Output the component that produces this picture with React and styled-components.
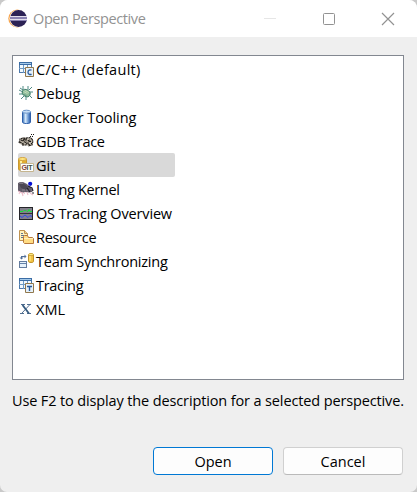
import React from "react";
import styled, { createGlobalStyle } from "styled-components";

const GlobalStyle = createGlobalStyle`
  * { box-sizing: border-box; }
  body { margin: 0; background: #c9c9c9; overflow: hidden; }
`;

const Dialog = styled.main`
  display: flex;
  flex-direction: column;
  width: 417px;
  height: 492px;
  overflow: hidden;
  border-radius: 8px 8px 7px 7px;
  background: #efefef;
  color: #000;
  font: 14.5px/24px "Open Sans", "Noto Sans", sans-serif;
`;

const TitleBar = styled.header`
  display: flex;
  align-items: center;
  height: 37px;
  padding-left: 8px;
  background: #fff;
  color: #929292;
`;

const Title = styled.h1`
  flex: 1;
  margin: 0 0 0 5px;
  font-size: 14.5px;
  font-weight: 400;
  white-space: nowrap;
`;

const Label = styled.span`
  letter-spacing: ${({ $spacing }) => $spacing || 0}px;
  white-space: nowrap;
`;

const WindowControls = styled.div`
  display: flex;
  height: 37px;
`;

const WindowButton = styled.button`
  display: grid;
  place-items: center;
  width: 59px;
  padding: 0;
  border: 0;
  background: none;
  color: ${({ $faint }) => ($faint ? "#e6e6e6" : "#929292")};
`;

const Content = styled.section`
  display: flex;
  flex: 1;
  flex-direction: column;
  padding: 18px 12px 17px;
`;

const List = styled.ul`
  display: flex;
  flex-direction: column;
  align-items: flex-start;
  width: 392px;
  height: 325px;
  margin: 0;
  padding: 1px 5px;
  border: 1px solid #828790;
  background: #fff;
  list-style: none;
`;

const Item = styled.li`
  display: flex;
  align-items: center;
  gap: 2px;
  width: 157px;
  height: 24px;
  border-radius: 2px;
  background: ${({ $selected }) => ($selected ? "#d9d9d9" : "transparent")};

  ${Label} {
    padding-top: 2px;
  }
`;

const Icon = styled.svg`
  display: block;
  flex: none;
  width: ${({ $size }) => $size || 16}px;
  height: ${({ $size }) => $size || 16}px;
`;

const Hint = styled.p`
  margin: 9px 0 0;
`;

const Actions = styled.footer`
  display: flex;
  justify-content: flex-end;
  gap: 10px;
  margin-top: auto;
  padding-right: 2px;
`;

const ActionButton = styled.button`
  width: 120px;
  height: 28px;
  padding: 1px 0 0;
  border: 1px solid ${({ $primary }) => ($primary ? "#0078d4" : "#d0d0d0")};
  border-bottom-color: ${({ $primary }) => ($primary ? "#0078d4" : "#bababa")};
  border-radius: 4px;
  background: #fdfdfd;
  color: #000;
  font: inherit;
  line-height: 26px;
`;

const TableBase = () => (
  <g shapeRendering="crispEdges">
    <path d="M1.500 1.500h12v10h-12z" fill="#f2f9fe" stroke="#4d79ab" />
    <path d="M1 1h13v3H1z" fill="#3b6da5" />
    <path d="M2 2h11v1H2z" fill="#a5caea" />
    <path d="M5.500 4v8M9.500 4v8M1 7.500h13" stroke="#6f9bc5" fill="none" />
  </g>
);

const CppIcon = () => (
  <Icon viewBox="0 0 16 16">
    <TableBase />
    <path d="M7.500 6.500h8v9h-8z" fill="#e6f1fa" stroke="#91784c" />
    <path d="M13.500 9.300c-1.300-1-3.500-.3-3.500 1.900s2.200 2.800 3.500 1.900" fill="none" stroke="#285b9c" strokeWidth="1.300" />
  </Icon>
);

const DebugIcon = () => (
  <Icon viewBox="0 0 16 16">
    <path d="M5 1v4M10 1v4M1 5l4 2M1 9h4M3 14l3-3M8 11v4M11 10l3 3M11 7h4M11 5l3-3M2 3l3 2" fill="none" stroke="#3b7d76" strokeWidth=".9" />
    <ellipse cx="8.200" cy="8" rx="4.300" ry="3.300" transform="rotate(30 8 8)" fill="#8fbd9c" stroke="#337461" strokeWidth=".8" />
    <path d="M5.500 6.500l4 2M7 5.500l4 2" stroke="#c4dcb8" />
    <path d="M5.500 9.500l3 1.200" stroke="#4b8975" strokeWidth=".8" />
  </Icon>
);

const DockerIcon = () => (
  <Icon viewBox="0 0 16 16">
    <defs>
      <linearGradient id="cylinder">
        <stop stopColor="#336fb8" />
        <stop offset=".38" stopColor="#d5e8fa" />
        <stop offset=".65" stopColor="#7fa9dc" />
        <stop offset="1" stopColor="#2356a7" />
      </linearGradient>
    </defs>
    <path d="M4.500 3v10c0 1 1.500 1.500 4 1.500s4-.5 4-1.500V3" fill="url(#cylinder)" stroke="#2f60ab" />
    <ellipse cx="8.500" cy="2.700" rx="4" ry="1.500" fill="#c6def7" stroke="#6b95ca" />
  </Icon>
);

const TraceIcon = () => (
  <Icon viewBox="0 0 16 16">
    <path d="M2 6l3-1.500h3l1 1 3-.5 2 1 1 3-1 3-3 1-3-1-3 .5-2-1L1 10z" fill="#b8b0a3" />
    <path d="M1 10l1-4 3-1 3 .5 3 2.500M2 9l3 2 1-3 3 3M3 7l2 1 1-2 3 2M4 12h4l1-2 3 2M8 5l4-.5 2 1.500M10 6l2 2-2 2M14 6l1 2-1 4-4 1" fill="none" stroke="#25211d" strokeWidth="1.100" strokeDasharray="2 .5" />
    <path d="M12 8h1v1h-1zM13 10h1v1h-1zM12 3h1v1h-1zM14 3h1v1h-1zM13 1h1v1h-1zM15 1h1v1h-1z" fill="#171513" />
    <path d="M9 7l2-1M11 10h1M5 9h1" stroke="#eee4d2" />
  </Icon>
);

const IconText = styled.text`
  font-family: "Liberation Sans", sans-serif;
  font-size: 7px;
  font-weight: 700;
`;

const GitIcon = () => (
  <Icon viewBox="0 0 16 16">
    <path d="M.5 2v10c0 1 1.700 1.500 4 1.500s4-.5 4-1.500V2" fill="#e2ad31" stroke="#c89832" />
    <path d="M2 4h2v9H2z" fill="#fff09a" />
    <ellipse cx="4.500" cy="2" rx="4" ry="1.500" fill="#ffe681" stroke="#d2a340" />
    <path d="M2.500 6.500h13v8h-13z" fill="#fff" stroke="#c5b58f" />
    <IconText x="3.500" y="13" textLength="11" lengthAdjust="spacing">
      <tspan fill="#803b35">G</tspan><tspan fill="#405344">IT</tspan>
    </IconText>
  </Icon>
);

const KernelIcon = () => (
  <Icon viewBox="0 0 16 16">
    <path d="M0 2l2-1h3l4 2 3 3 3 3-1 2-3 .5-4-.5-3 1-4-2z" fill="#625c69" />
    <path d="M1 3l3-1 4 2 3 4-3 1-5-2z" fill="#4b4752" />
    <path d="M1 2l4 .3M4 9h3M8 9h3M13 9h2" stroke="#8d8791" />
    <path d="M10 5l4 2 1 3M9 7l3 4M14 12h2" fill="none" stroke="#211e2a" strokeWidth="1.200" />
    <circle cx="12.200" cy="2.800" r="2.100" fill="#0710d0" />
    <path d="M2 11l-1 2M4 11l1 4M7 11l-1 2M9 11l1 3M12 12l3 2M0 10l4 2" stroke="#edc2ce" strokeWidth="1.200" />
  </Icon>
);

const OverviewIcon = () => (
  <Icon viewBox="0 0 16 16">
    <g shapeRendering="crispEdges">
      <path d="M1.500 2.500h13v12h-13z" fill="#81808b" stroke="#252529" />
      <path d="M2 8.500h12" stroke="#323239" />
    </g>
    <path d="M2 6.500h3l1-1h2l1 1h1l1-2 1 2h2" fill="none" stroke="#12e339" />
    <path d="M2 11l2 1.500L7 10l3 2.500 2-2 2 1" fill="none" stroke="#3049f2" />
  </Icon>
);

const ResourceIcon = () => (
  <Icon viewBox="0 0 16 16">
    <path d="M1.500 1.500h5l3 3v7h-8z" fill="#fff2bd" stroke="#bf9250" />
    <path d="M6.500 1.500v3h3" fill="#ecd093" stroke="#bf9250" />
    <path d="M3 4.500h2M3 6.500h3M3 8.500h2" stroke="#61748f" />
    <path d="M5.500 13.500v-6l1-1h3l1 2h4l1 1v5h-9z" fill="#ffdc83" stroke="#b6783c" />
    <path d="M6 9.500h9" stroke="#fff1bd" />
  </Icon>
);

const TeamIcon = () => (
  <Icon viewBox="0 0 16 16">
    <g shapeRendering="crispEdges">
      <path d="M1.500 8.500h7v6h-7z" fill="#e7f2fb" stroke="#647c9e" />
      <path d="M2 10.500h6" stroke="#6583ab" />
      <path d="M3.500 6V3.500H7" fill="none" stroke="#526f98" />
    </g>
    <path d="M1.500 4.500h4l-2 2zM6.500 1.500v4l2-2z" fill="#526f98" />
    <path d="M10.500 1.500v7c0 .7 1 1 2.500 1s2.500-.3 2.500-1v-7" fill="#f2c344" stroke="#c1942d" />
    <ellipse cx="13" cy="1.600" rx="2.500" ry="1.100" fill="#ffec83" stroke="#cda43d" />
    <path d="M12 3v5" stroke="#fff19e" />
  </Icon>
);

const TracingIcon = () => (
  <Icon viewBox="0 0 16 16">
    <TableBase />
    <path d="M7.500 6.500h8v9h-8z" fill="#e6f1fa" stroke="#91784c" />
    <path d="M9 9.500h5M11.500 9v5" stroke="#285b9c" strokeWidth="1.400" />
  </Icon>
);

const XmlIcon = () => (
  <Icon viewBox="0 0 16 16">
    <path d="M3 3.500h4M9 3.500h4M2 12.500h4M9 12.500h4M11.500 4L4 12" fill="none" stroke="#526f91" />
    <path d="M4.500 4l6.500 8.500" stroke="#34597e" strokeWidth="1.800" />
  </Icon>
);

const EclipseIcon = () => (
  <Icon $size={20} viewBox="0 0 20 20">
    <circle cx="9.300" cy="9.500" r="9" fill="#f7a44b" />
    <circle cx="10.300" cy="9.500" r="8.800" fill="#fff" />
    <circle cx="10.500" cy="9.500" r="8.400" fill="#2c2255" />
    <path d="M2 7h17v5H2z" fill="#8a82b2" />
    <path d="M2 7.500h17M2 10.500h17" stroke="#e3dfec" />
  </Icon>
);

const perspectives = [
  { name: "C/C++ (default)", Picture: CppIcon, spacing: 0.3 },
  { name: "Debug", Picture: DebugIcon },
  { name: "Docker Tooling", Picture: DockerIcon, spacing: -0.06 },
  { name: "GDB Trace", Picture: TraceIcon, spacing: -0.28 },
  { name: "Git", Picture: GitIcon },
  { name: "LTTng Kernel", Picture: KernelIcon, spacing: -0.35 },
  { name: "OS Tracing Overview", Picture: OverviewIcon, spacing: -0.16 },
  { name: "Resource", Picture: ResourceIcon, spacing: -0.3 },
  { name: "Team Synchronizing", Picture: TeamIcon, spacing: -0.23 },
  { name: "Tracing", Picture: TracingIcon, spacing: -0.3 },
  { name: "XML", Picture: XmlIcon },
];

export default function App() {
  return (
    <>
      <GlobalStyle />
      <Dialog>
        <TitleBar>
          <EclipseIcon />
          <Title><Label $spacing={-0.4}>Open Perspective</Label></Title>
          <WindowControls>
            <WindowButton $faint aria-label="Minimize">
              <Icon viewBox="0 0 16 16"><path d="M2 7.500h12" stroke="currentColor" /></Icon>
            </WindowButton>
            <WindowButton aria-label="Maximize">
              <Icon viewBox="0 0 16 16"><rect x="2.500" y="2.500" width="11" height="11" rx="1" fill="none" stroke="currentColor" /></Icon>
            </WindowButton>
            <WindowButton aria-label="Close">
              <Icon viewBox="0 0 16 16"><path d="M2 2l12 12M14 2L2 14" stroke="currentColor" strokeWidth="1.200" /></Icon>
            </WindowButton>
          </WindowControls>
        </TitleBar>
        <Content>
          <List>
            {perspectives.map(({ name, Picture, spacing }) => (
              <Item key={name} $selected={name === "Git"}>
                <Picture />
                <Label $spacing={spacing}>{name}</Label>
              </Item>
            ))}
          </List>
          <Hint><Label $spacing={-0.13}>Use F2 to display the description for a selected perspective.</Label></Hint>
          <Actions>
            <ActionButton $primary>Open</ActionButton>
            <ActionButton>Cancel</ActionButton>
          </Actions>
        </Content>
      </Dialog>
    </>
  );
}
